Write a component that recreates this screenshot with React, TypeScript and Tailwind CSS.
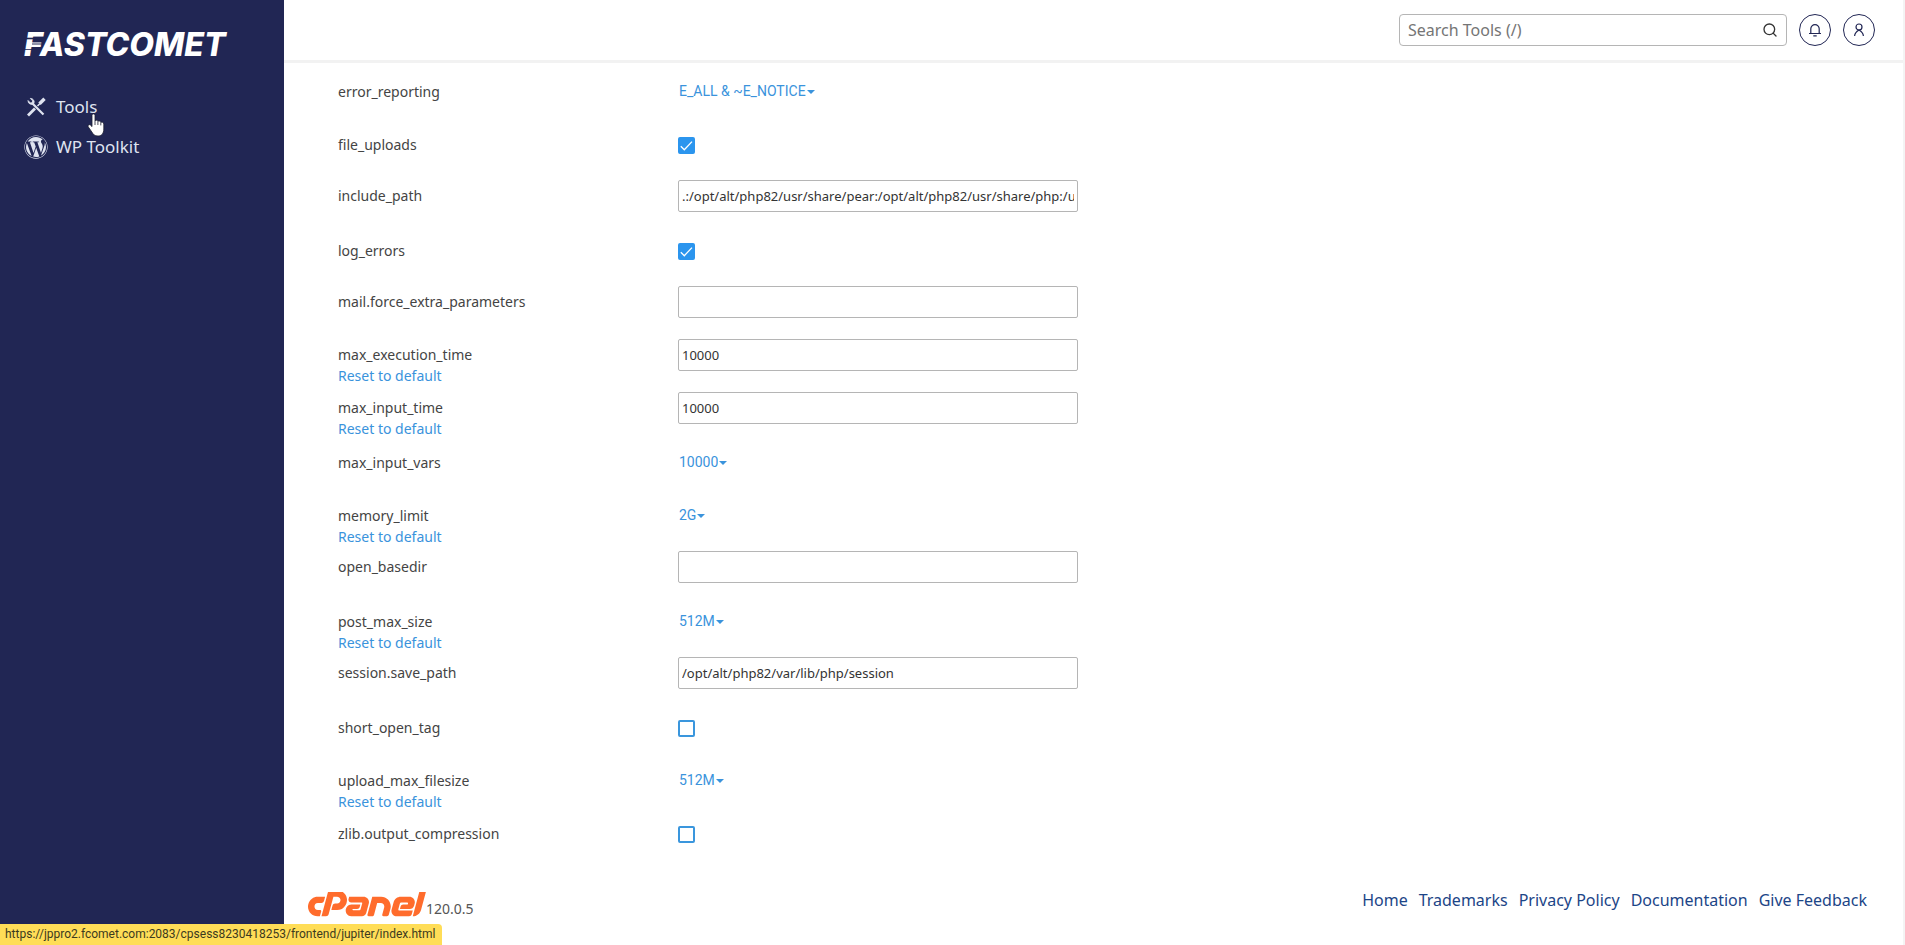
import React, { useState } from 'react';
import { FaCpanel, FaWordpress } from 'react-icons/fa';
import { Search } from 'lucide-react';

type Option = {
  name: string;
  type: 'select' | 'checkbox' | 'text';
  value: string | boolean;
  resettable?: boolean;
};

const phpOptions: Option[] = [
  { name: 'error_reporting', type: 'select', value: 'E_ALL & ~E_NOTICE' },
  { name: 'file_uploads', type: 'checkbox', value: true },
  {
    name: 'include_path',
    type: 'text',
    value: '.:/opt/alt/php82/usr/share/pear:/opt/alt/php82/usr/share/php:/usr/share/pear:/usr/share/php'
  },
  { name: 'log_errors', type: 'checkbox', value: true },
  { name: 'mail.force_extra_parameters', type: 'text', value: '' },
  { name: 'max_execution_time', type: 'text', value: '10000', resettable: true },
  { name: 'max_input_time', type: 'text', value: '10000', resettable: true },
  { name: 'max_input_vars', type: 'select', value: '10000' },
  { name: 'memory_limit', type: 'select', value: '2G', resettable: true },
  { name: 'open_basedir', type: 'text', value: '' },
  { name: 'post_max_size', type: 'select', value: '512M', resettable: true },
  { name: 'session.save_path', type: 'text', value: '/opt/alt/php82/var/lib/php/session' },
  { name: 'short_open_tag', type: 'checkbox', value: false },
  { name: 'upload_max_filesize', type: 'select', value: '512M', resettable: true },
  { name: 'zlib.output_compression', type: 'checkbox', value: false }
];

const footerLinks = ['Home', 'Trademarks', 'Privacy Policy', 'Documentation', 'Give Feedback'];

const ToolsIcon = () => (
  <svg className="w-5 h-5" viewBox="0 0 20 20" fill="none" stroke="currentColor">
    <path d="M6 6 L17.5 17.5" strokeWidth="2.2" />
    <path d="M2 3.5 L4.5 6 L6.3 5.6 L6.6 3.8 L4.3 1.4 A3.6 3.6 0 0 1 7.8 6.6 A3.6 3.6 0 0 1 2 3.5" fill="currentColor" strokeWidth="0.8" />
    <path d="M2 18.5 L9 11.5" strokeWidth="2.8" />
    <path d="M11.5 9 L14 6.5" strokeWidth="1.6" />
    <path d="M13.5 6.8 L18.5 1.8" strokeWidth="3.4" />
  </svg>
);

const BellIcon = () => (
  <svg className="w-4 h-4" viewBox="0 0 16 16" fill="none" stroke="currentColor" strokeWidth="1.2">
    <path d="M3.8 11.5 V6.8 A4.2 4.2 0 0 1 12.2 6.8 V11.5 M2 11.5 H14 M6.3 13.8 H9.7" />
  </svg>
);

const UserIcon = () => (
  <svg className="w-4 h-4" viewBox="0 0 16 16" fill="none" stroke="currentColor" strokeWidth="1.2">
    <circle cx="8" cy="5" r="3" />
    <path d="M3.6 14 C3.8 11 5.6 9.4 8 8 C10.4 9.4 12.2 11 12.4 14" />
  </svg>
);

const HandCursor = () => (
  <svg className="absolute left-[87px] top-[113px] w-[18px] h-[24px] pointer-events-none" viewBox="0 0 18 24">
    <path
      d="M5 2.4 C5 0.4 8 0.4 8 2.4 V8 C8.6 6.8 10.7 7 10.9 8.4 C11.6 7.6 13.6 8 13.8 9.4 C14.8 8.8 16.8 9.4 16.8 11 V16 C16.8 20.5 14.5 23 11 23 C7.6 23 6.4 21.6 5 19.2 L1.2 13.8 C0.4 12.2 2.2 11 3.4 12 L5 13.6 Z"
      fill="#fff"
      stroke="#1d2030"
      strokeWidth="0.8"
    />
    <path d="M8 8 V12 M10.9 8.6 V12 M13.8 9.6 V12.4" stroke="#1d2030" strokeWidth="0.8" />
  </svg>
);

const OptionControl: React.FC<{ option: Option }> = ({ option }) => {
  const [value, setValue] = useState(option.value);

  if (option.type === 'checkbox') {
    return (
      <span className="relative block w-[17px] h-[17px] mt-3">
        <input
          id={option.name}
          type="checkbox"
          checked={value as boolean}
          onChange={e => setValue(e.target.checked)}
          className="peer block w-[17px] h-[17px] appearance-none rounded-xs border-2 border-[#3a96dd] bg-white checked:bg-[#2b95ee] checked:border-[#2b95ee]"
        />
        <svg
          className="absolute inset-0 w-[17px] h-[17px] hidden peer-checked:block pointer-events-none"
          viewBox="0 0 17 17"
          fill="none"
          stroke="#fff"
          strokeWidth="1.3"
        >
          <path d="M2.8 9.2 L6.3 12.7 L14 4.6" />
        </svg>
      </span>
    );
  }

  if (option.type === 'select') {
    return (
      <span className="relative inline-block mt-[7px] text-[#3a93dc]">
        <select
          id={option.name}
          value={value as string}
          onChange={e => setValue(e.target.value)}
          className="block h-6 pl-px pr-[9px] appearance-none bg-transparent field-sizing-content font-[Roboto,sans-serif] text-sm"
        >
          <option>{option.value as string}</option>
        </select>
        <svg className="absolute right-0 top-[11px] w-2 h-1 pointer-events-none" viewBox="0 0 8 4">
          <path d="M0 0 H8 L4 4 Z" fill="currentColor" />
        </svg>
      </span>
    );
  }

  return (
    <input
      id={option.name}
      type="text"
      value={value as string}
      onChange={e => setValue(e.target.value)}
      className="block w-[400px] h-8 mt-0.5 px-[3px] rounded-xs border border-[#b5b5b5] bg-white text-[13px] text-[#333]"
    />
  );
};

const OptionRow: React.FC<{ option: Option }> = ({ option }) => (
  <div className="flex h-[53px]">
    <div className={`w-[340px] flex flex-col items-start text-sm leading-[21px] ${option.type === 'text' ? 'pt-[7px]' : 'pt-[9px]'}`}>
      <label htmlFor={option.name} className="text-[#444]">{option.name}</label>
      {option.resettable && (
        <a href="#reset" className="text-[#3a93dc]">Reset to default</a>
      )}
    </div>
    <div>
      <OptionControl option={option} />
    </div>
  </div>
);

const Sidebar = () => (
  <aside className="relative w-[284px] shrink-0 bg-[#212654] text-[#dfe3f0]">
    <a href="#home" className="relative block w-fit ml-6 mt-[25px] h-10 leading-10 text-[32px] font-extrabold italic text-white font-[Inter,sans-serif]">
      FASTCOMET
      {/* Speed lines across the first letter */}
      <svg className="absolute left-0 top-0 w-6 h-10" viewBox="0 0 24 40" stroke="#212654">
        <path d="M0 13.5 H19" strokeWidth="1.6" />
        <path d="M8 19 H18" strokeWidth="1" />
        <path d="M0 24.5 H10" strokeWidth="0.8" />
      </svg>
    </a>
    <nav className="mt-[30px] ml-6 flex flex-col gap-4 text-[17px] leading-6">
      <a href="#tools" className="flex items-center gap-2">
        <span className="w-6 flex justify-center"><ToolsIcon /></span>
        Tools
      </a>
      <a href="#wp" className="flex items-center gap-2">
        <FaWordpress className="w-6 h-6" />
        WP Toolkit
      </a>
    </nav>
    <HandCursor />
  </aside>
);

const Header = () => (
  <header className="flex items-center justify-end gap-3 h-[63px] pr-7 border-b-3 border-[#f2f2f2]">
    <div className="flex items-center w-[388px] h-8 px-2 rounded-sm border border-[#b5b5b5]">
      <input
        type="text"
        aria-label="Search Tools"
        placeholder="Search Tools (/)"
        className="flex-1 min-w-0 text-base outline-none placeholder:text-[#757575]"
      />
      <button aria-label="Search">
        <Search className="w-4 h-4 text-[#333]" strokeWidth={2} />
      </button>
    </div>
    <button aria-label="Notifications" className="w-8 h-8 rounded-full border border-[#212654] text-[#212654] flex items-center justify-center">
      <BellIcon />
    </button>
    <button aria-label="Account" className="w-8 h-8 rounded-full border border-[#212654] text-[#212654] flex items-center justify-center">
      <UserIcon />
    </button>
  </header>
);

export default function App() {
  return (
    <div className="relative flex min-h-screen bg-white font-['Noto_Sans',sans-serif]">
      <Sidebar />
      <div className="flex-1 flex flex-col border-r-2 border-[#f4f4f4]">
        <Header />
        <main className="pl-[54px] pt-[9px]">
          {phpOptions.map(option => (
            <OptionRow key={option.name} option={option} />
          ))}
        </main>
        <footer className="flex items-start justify-between pl-6 pr-9 pt-[21px]">
          <div className="flex items-end pt-1 text-[#555]">
            <FaCpanel viewBox="0 192 640 128" className="w-[118px] h-[25px] mb-0.5 text-[#ff6c2c]" />
            <span className="text-sm leading-5">120.0.5</span>
          </div>
          <nav className="flex gap-[11px] text-base text-[#1c4587]">
            {footerLinks.map(link => (
              <a key={link} href="#footer">{link}</a>
            ))}
          </nav>
        </footer>
      </div>

      {/* Link preview */}
      <div className="absolute left-0 bottom-0 h-[21px] pl-[5px] pr-[7px] rounded-tr-sm bg-[#ffdd57] font-[Roboto,sans-serif] text-xs leading-5 text-[#3c3a20]">
        https://jppro2.fcomet.com:2083/cpsess8230418253/frontend/jupiter/index.html
      </div>
    </div>
  );
}
